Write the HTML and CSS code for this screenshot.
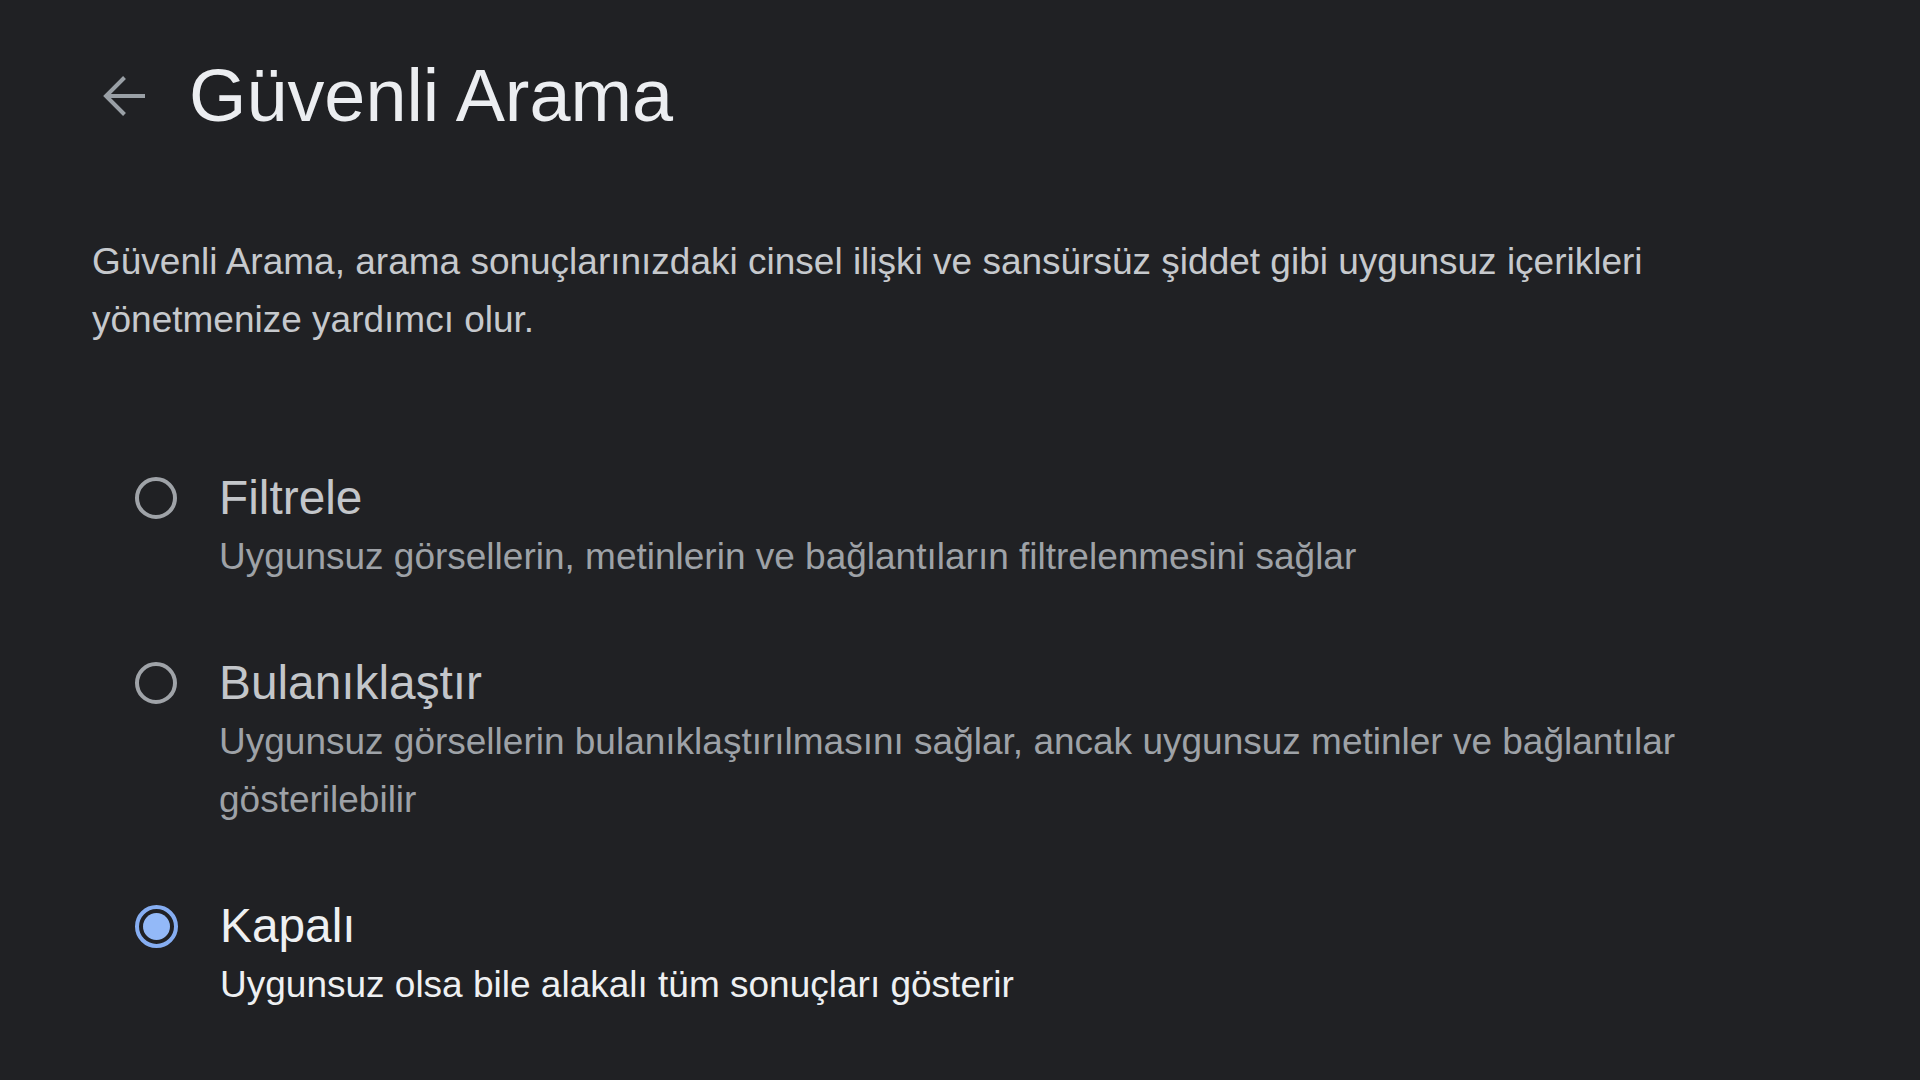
FILE: index.html
```html
<!DOCTYPE html>
<html lang="tr">
<head>
<meta charset="utf-8">
<title>Güvenli Arama</title>
<link rel="stylesheet" href="styles.css">
</head>
<body>
<main class="page">
  <header class="header">
    <svg class="back" width="44" height="44" viewBox="0 0 44 44" aria-hidden="true">
      <path d="M43 22H4" />
      <path d="M22.5 3.5L4 22l18.5 18.5" />
    </svg>
    <h1 class="title">Güvenli Arama</h1>
  </header>

  <p class="desc">Güvenli Arama, arama sonuçlarınızdaki cinsel ilişki ve sansürsüz şiddet gibi uygunsuz içerikleri yönetmenize yardımcı olur.</p>

  <div class="options">
    <div class="option">
      <div class="radio-box"><span class="radio"></span></div>
      <div class="option-text">
        <div class="label">Filtrele</div>
        <div class="sub">Uygunsuz görsellerin, metinlerin ve bağlantıların filtrelenmesini sağlar</div>
      </div>
    </div>
    <div class="option">
      <div class="radio-box"><span class="radio"></span></div>
      <div class="option-text">
        <div class="label">Bulanıklaştır</div>
        <div class="sub">Uygunsuz görsellerin bulanıklaştırılmasını sağlar, ancak uygunsuz metinler ve bağlantılar gösterilebilir</div>
      </div>
    </div>
    <div class="option selected">
      <div class="radio-box"><span class="radio"></span></div>
      <div class="option-text">
        <div class="label">Kapalı</div>
        <div class="sub">Uygunsuz olsa bile alakalı tüm sonuçları gösterir</div>
      </div>
    </div>
  </div>
</main>
</body>
</html>
```

FILE: styles.css
```css
* { box-sizing: border-box; }

html, body {
  margin: 0;
  padding: 0;
  background: #202124;
}

body {
  font-family: "Liberation Sans", Arial, Helvetica, sans-serif;
  color: #e8eaed;
  width: 1920px;
  height: 1080px;
  overflow: hidden;
}

.page {
  padding: 56px 160px 0 92px;
}

.header {
  display: flex;
  align-items: center;
  height: 80px;
  padding-left: 10px;
  gap: 43px;
}

.back {
  flex: none;
  fill: none;
  stroke: #9aa0a6;
  stroke-width: 4;
  stroke-linejoin: miter;
  stroke-linecap: butt;
}

.title {
  margin: 0;
  font-size: 73.8px;
  line-height: 80px;
  font-weight: 400;
  color: #eceef1;
}

.desc {
  margin: 97px 0 0 0;
  font-size: 37px;
  line-height: 58px;
  color: #c6c9cd;
}

.options {
  margin-top: 119px;
  padding-left: 43px;
  display: flex;
  flex-direction: column;
  gap: 67px;
}

.option {
  display: flex;
  align-items: flex-start;
  gap: 42px;
}

.radio-box {
  flex: none;
  height: 60px;
  display: flex;
  align-items: center;
}

.radio {
  display: block;
  width: 42px;
  height: 42px;
  border: 4px solid #9fa3a8;
  border-radius: 50%;
  position: relative;
}

.selected .radio {
  width: 43px;
  height: 43px;
  border-color: #86aef2;
}

.selected .radio::after {
  content: "";
  position: absolute;
  left: 4px;
  top: 4px;
  right: 4px;
  bottom: 4px;
  border-radius: 50%;
  background: #93b9f8;
}

.option-text {
  flex: 1;
  min-width: 0;
}

.label {
  font-size: 47.8px;
  line-height: 60px;
  color: #c3c6ca;
}

.sub {
  font-size: 37px;
  line-height: 58px;
  color: #9ea2a7;
}

.selected .label {
  color: #eef0f2;
}

.selected .sub {
  color: #eef0f2;
}
```
